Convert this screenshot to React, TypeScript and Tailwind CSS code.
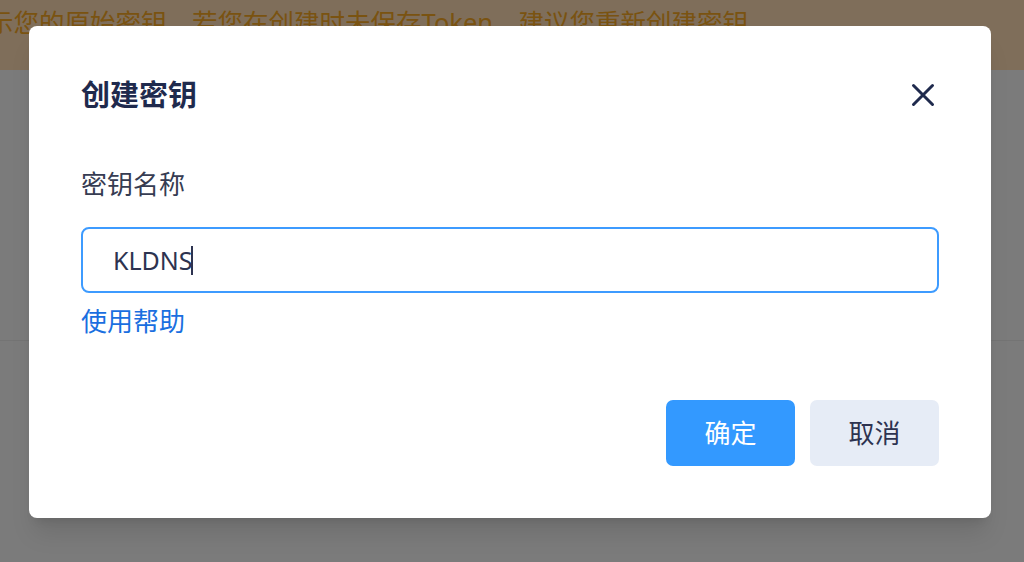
import React, { useState } from 'react';

const font = { fontFamily: '"Noto Sans", "Noto Sans CJK SC", sans-serif' };

const CloseIcon = () => (
  <svg className="h-[24px] w-[24px]" viewBox="0 0 24 24" fill="none" stroke="currentColor">
    <path strokeLinecap="round" strokeWidth={3} d="M2.5 2.5l19 19M21.5 2.5l-19 19" />
  </svg>
);

export default function App() {
  const [name, setName] = useState('KLDNS');

  return (
    <div className="relative h-[562px] w-[1024px] overflow-hidden bg-[#f6f6f6]" style={font}>
      {/* page behind the dialog */}
      <div className="flex h-[70px] items-start overflow-hidden bg-[#fedcb4] pt-[4px]">
        <p className="-ml-[12px] whitespace-nowrap text-[25.5px] leading-[36px] text-[#f5a623]">
          示您的原始密钥，若您在创建时未保存Token，建议您重新创建密钥
        </p>
      </div>
      <div className="h-[271px] border-b border-[#e8e8e8]" />

      {/* overlay */}
      <div className="absolute inset-0 bg-black/50 pl-[29px] pt-[26px]">
        <div className="flex h-[492px] w-[962px] flex-col rounded-[8px] bg-white px-[52px] pb-[52px] pt-[50px] shadow-xl">
          <div className="flex items-center justify-between">
            <h3 className="text-[29px] font-bold leading-[38px] text-[#1f2a4d]">创建密钥</h3>
            <button className="mr-[4px] text-[#1f2a4d]" aria-label="关闭">
              <CloseIcon />
            </button>
          </div>

          <label className="mt-[53px] text-[26px] leading-[34px] text-[#363c52]">密钥名称</label>
          <div className="relative mt-[26px]">
            <input
              value={name}
              onChange={(e) => setName(e.target.value)}
              className="h-[66px] w-full rounded-[8px] border-2 border-[#3d9bff] px-[30px] text-[25px] text-[#2d3350] outline-none"
            />
            {/* caret */}
            <span className="pointer-events-none absolute left-[110px] top-[19px] h-[29px] w-[1.5px] bg-[#2d3350]" />
          </div>
          <a href="#" className="mt-[10px] text-[26px] leading-[36px] text-[#1a6fe0]">
            使用帮助
          </a>

          <div className="mt-auto flex justify-end gap-[15px]">
            <button className="h-[66px] w-[129px] rounded-[7px] bg-[#3399ff] text-[26px] text-white">
              确定
            </button>
            <button className="h-[66px] w-[129px] rounded-[7px] bg-[#e6ecf6] text-[26px] text-[#2d3350]">
              取消
            </button>
          </div>
        </div>
      </div>
    </div>
  );
}
